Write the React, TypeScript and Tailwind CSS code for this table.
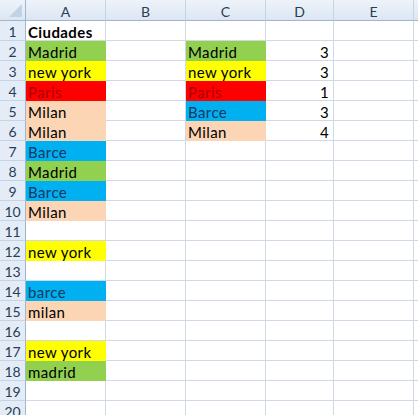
import React from 'react';

type Cell = { text?: string; fill?: string; color?: string; bold?: boolean; right?: boolean };

const GREEN = '#92d050';
const YELLOW = '#ffff00';
const RED = '#ff0000';
const BLUE = '#00b0f0';
const PEACH = '#fcd5b4';

const madrid = (t = 'Madrid'): Cell => ({ text: t, fill: GREEN });
const ny: Cell = { text: 'new york', fill: YELLOW };
const paris: Cell = { text: 'Paris', fill: RED, color: '#a50000' };
const barce = (t = 'Barce'): Cell => ({ text: t, fill: BLUE, color: '#17375e' });
const milan = (t = 'Milan'): Cell => ({ text: t, fill: PEACH });

// columns A..E for rows 1..20
const rows: Record<number, Record<string, Cell>> = {
  1: { A: { text: 'Ciudades', bold: true } },
  2: { A: madrid(), C: madrid(), D: { text: '3', right: true } },
  3: { A: ny, C: ny, D: { text: '3', right: true } },
  4: { A: paris, C: paris, D: { text: '1', right: true } },
  5: { A: milan(), C: barce(), D: { text: '3', right: true } },
  6: { A: milan(), C: milan(), D: { text: '4', right: true } },
  7: { A: barce() },
  8: { A: madrid() },
  9: { A: barce() },
  10: { A: milan() },
  12: { A: ny },
  14: { A: barce('barce') },
  15: { A: milan('milan') },
  17: { A: ny },
  18: { A: madrid('madrid') },
};

const cols = ['A', 'B', 'C', 'D', 'E'];
const widths: Record<string, string> = { A: 'w-[80px]', B: 'w-[80px]', C: 'w-[80px]', D: 'w-[68px]', E: 'w-[80px]' };

export default function App() {
  return (
    <div className="w-[418px] h-[415px] overflow-hidden bg-white font-['Lato','Liberation_Sans',sans-serif] text-[15px] text-black">
      {/* column header */}
      <div className="flex h-[21px]">
        <div className="w-[26px] h-[21px] shrink-0 border-r border-b border-[#9eb6ce] bg-gradient-to-b from-[#eef3fa] to-[#dce6f2] flex items-end justify-end p-[3px]">
          <div className="w-0 h-0 border-l-[13px] border-l-transparent border-b-[13px] border-b-[#c2d2e5]" />
        </div>
        {cols.map(c => (
          <div
            key={c}
            className={`${widths[c]} h-[21px] shrink-0 border-r border-b border-r-[#c5d3e3] border-b-[#9eb6ce] bg-gradient-to-b from-[#eef3fa] to-[#dce6f2] flex items-center justify-center pt-[2px] text-[14px] text-[#2a3d55]`}
          >
            {c}
          </div>
        ))}
        <div className="flex-1 h-[21px] border-b border-[#9eb6ce] bg-gradient-to-b from-[#eef3fa] to-[#dce6f2]" />
      </div>

      {Array.from({ length: 20 }, (_, i) => i + 1).map(r => (
        <div key={r} className="flex h-[20px]">
          <div className="w-[26px] h-[20px] shrink-0 border-r border-b border-r-[#9eb6ce] border-b-[#c5d3e3] bg-[#e4ecf7] flex items-start justify-center pt-[3px] text-[14px] text-[#2a3d55] leading-[16px]">
            {r}
          </div>
          {cols.map(c => {
            const cell = rows[r]?.[c];
            return (
              <div
                key={c}
                className={`${widths[c]} h-[20px] shrink-0 border-r border-b border-[#d0d7e5] flex items-start pt-[3px] px-[2px] leading-[17px] tracking-[0.4px] whitespace-nowrap ${cell?.right ? 'justify-end pr-[4px]' : ''} ${cell?.bold ? 'font-bold' : ''}`}
                style={cell?.fill ? { backgroundColor: cell.fill, borderColor: cell.fill, color: cell.color } : undefined}
              >
                {cell?.text}
              </div>
            );
          })}
          <div className="flex-1 h-[20px] border-b border-[#d0d7e5]" />
        </div>
      ))}
    </div>
  );
}
